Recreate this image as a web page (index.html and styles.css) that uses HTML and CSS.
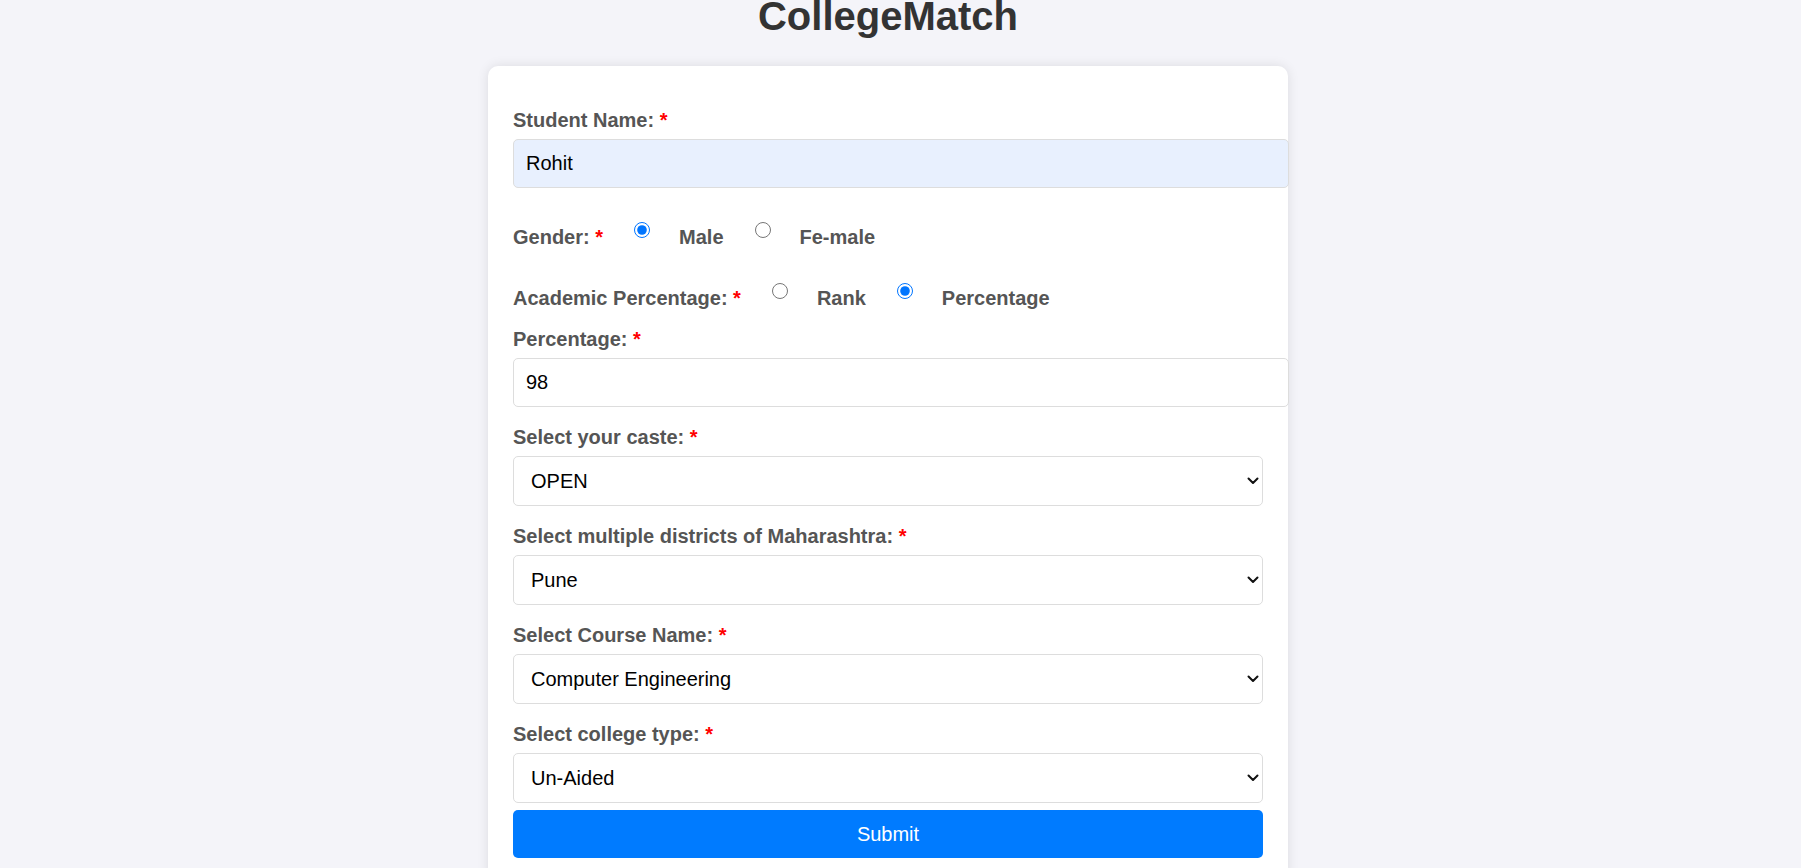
FILE: index.html
```html
<!DOCTYPE html>
<html lang="en">
<head>
<meta charset="utf-8">
<title>CollegeMatch</title>
<link rel="stylesheet" href="styles.css">
</head>
<body>
<div class="page">
  <h1 class="title">CollegeMatch</h1>
  <form class="card">
    <label class="lbl">Student Name: <span class="req">*</span></label>
    <input class="txt autofilled" type="text" value="Rohit">

    <div class="radio-row row-gender">
      <span class="lbl inline">Gender: <span class="req">*</span></span>
      <input class="rad" type="radio" name="g" checked>
      <span class="opt">Male</span>
      <input class="rad" type="radio" name="g">
      <span class="opt">Fe-male</span>
    </div>

    <div class="radio-row row-academic">
      <span class="lbl inline">Academic Percentage: <span class="req">*</span></span>
      <input class="rad" type="radio" name="a">
      <span class="opt">Rank</span>
      <input class="rad" type="radio" name="a" checked>
      <span class="opt">Percentage</span>
    </div>

    <label class="lbl">Percentage: <span class="req">*</span></label>
    <input class="txt" type="text" value="98">

    <label class="lbl">Select your caste: <span class="req">*</span></label>
    <div class="sel-wrap">
      <select class="sel"><option>OPEN</option><option>OBC</option><option>SC</option><option>ST</option></select>
      <svg class="chev" width="12" height="8" viewBox="0 0 12 8"><polyline points="1.5,1.5 6,6 10.5,1.5" fill="none" stroke="#111" stroke-width="2" stroke-linecap="round" stroke-linejoin="round"/></svg>
    </div>

    <label class="lbl">Select multiple districts of Maharashtra: <span class="req">*</span></label>
    <div class="sel-wrap">
      <select class="sel"><option>Pune</option><option>Mumbai</option><option>Nagpur</option></select>
      <svg class="chev" width="12" height="8" viewBox="0 0 12 8"><polyline points="1.5,1.5 6,6 10.5,1.5" fill="none" stroke="#111" stroke-width="2" stroke-linecap="round" stroke-linejoin="round"/></svg>
    </div>

    <label class="lbl">Select Course Name: <span class="req">*</span></label>
    <div class="sel-wrap">
      <select class="sel"><option>Computer Engineering</option><option>Mechanical Engineering</option></select>
      <svg class="chev" width="12" height="8" viewBox="0 0 12 8"><polyline points="1.5,1.5 6,6 10.5,1.5" fill="none" stroke="#111" stroke-width="2" stroke-linecap="round" stroke-linejoin="round"/></svg>
    </div>

    <label class="lbl">Select college type: <span class="req">*</span></label>
    <div class="sel-wrap last">
      <select class="sel"><option>Un-Aided</option><option>Aided</option></select>
      <svg class="chev" width="12" height="8" viewBox="0 0 12 8"><polyline points="1.5,1.5 6,6 10.5,1.5" fill="none" stroke="#111" stroke-width="2" stroke-linecap="round" stroke-linejoin="round"/></svg>
    </div>

    <button class="btn" type="button">Submit</button>
  </form>
</div>
</body>
</html>
```
FILE: styles.css
```css
html, body {
  margin: 0;
  padding: 0;
  overflow: hidden;
}
body {
  background: #f4f4f9;
  font-family: "Liberation Sans", Arial, sans-serif;
}
.page {
  width: 1776px;
}
.title {
  margin: -7px 0 27px;
  font-size: 40px;
  line-height: 46px;
  font-weight: bold;
  color: #333;
  text-align: center;
}
.card {
  width: 750px;
  margin: 0 auto;
  padding: 42px 25px 25px;
  background: #fff;
  border-radius: 10px;
  box-shadow: 0 0 12px rgba(0, 0, 0, 0.1);
}
.lbl {
  display: block;
  font-size: 20px;
  line-height: 23px;
  font-weight: bold;
  color: #555;
  padding-top: 1px;
  margin-bottom: 7px;
}
.lbl.inline {
  display: inline-block;
  padding-top: 0;
  margin: 0 31px 0 0;
}
.req {
  color: #ff0000;
}
.txt {
  display: block;
  width: 100%;
  box-sizing: content-box;
  height: 23px;
  padding: 12px;
  margin: 0 0 18px;
  font-family: "Liberation Sans", Arial, sans-serif;
  font-size: 20px;
  line-height: 23px;
  color: #000;
  border: 1px solid #ddd;
  border-radius: 5px;
  background: #fff;
  outline: none;
}
.txt.autofilled {
  background: #e8f0fe;
  margin-bottom: 38px;
}
.radio-row {
  display: flex;
  align-items: flex-start;
  height: 23px;
}
.row-gender {
  margin-bottom: 38px;
}
.row-academic {
  margin-bottom: 17px;
}
.rad {
  width: 16px;
  height: 16px;
  margin: -4px 29px 0 0;
  flex: none;
}
.opt {
  font-size: 20px;
  line-height: 23px;
  font-weight: bold;
  color: #555;
  margin-right: 31px;
}
.sel-wrap {
  position: relative;
  margin-bottom: 18px;
}
.sel-wrap.last {
  margin-bottom: 7px;
}
.sel {
  display: block;
  width: 100%;
  height: 50px;
  box-sizing: border-box;
  padding: 0 30px 0 17px;
  font-family: "Liberation Sans", Arial, sans-serif;
  font-size: 20px;
  color: #000;
  border: 1px solid #ddd;
  border-radius: 5px;
  background: #fff;
  -webkit-appearance: none;
  appearance: none;
  outline: none;
}
.chev {
  position: absolute;
  right: 4px;
  top: 21px;
  pointer-events: none;
}
.btn {
  display: block;
  width: 100%;
  height: 48px;
  border: none;
  border-radius: 5px;
  background: #007bff;
  color: #fff;
  font-family: "Liberation Sans", Arial, sans-serif;
  font-size: 20px;
  cursor: pointer;
}
```
